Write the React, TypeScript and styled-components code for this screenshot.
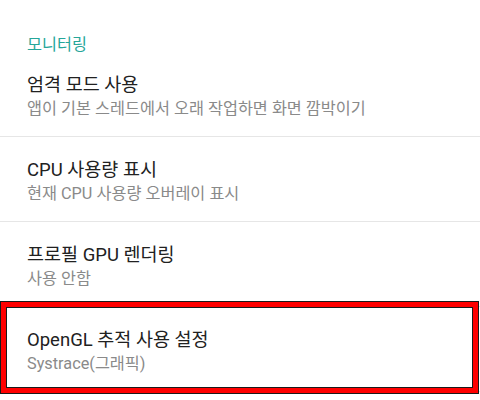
import styled, { createGlobalStyle } from "styled-components"

const GlobalStyle = createGlobalStyle`
  html, body {
    margin: 0;
    padding: 0;
    background: #ffffff;
    overflow: hidden;
  }
  body {
    font-family: Roboto, "Noto Sans CJK KR", "Noto Sans", sans-serif;
  }
`

const Screen = styled.div`
  width: 480px;
  height: 400px;
  background: #ffffff;
  overflow: hidden;
`

const SectionHeader = styled.div`
  padding: 36px 27px 0;
  height: 16px;
  font-size: 16.3px;
  line-height: 18px;
  color: #26a69a;
`

const Row = styled.div`
  position: relative;
  display: flex;
  flex-direction: column;
  height: 85px;
  padding: 21px 27px 0;
  box-sizing: border-box;
  border-bottom: 1px solid #e6e6e6;
`

const Title = styled.div`
  font-size: 18.5px;
  line-height: 24px;
  color: #212121;
`

const Summary = styled.div`
  margin-top: 2px;
  font-size: 16.3px;
  line-height: 20px;
  color: #8a8a8a;
`

const HighlightFrame = styled.div`
  position: absolute;
  left: 1px;
  right: 2px;
  top: -5px;
  bottom: -2px;
  border: 5px solid #ff0000;
  outline: 1px solid #1a1a1a;
  box-shadow: inset 0 0 0 1px #1a1a1a;
  pointer-events: none;
`

type Pref = { title: string; summary: string; highlight?: boolean }

const prefs: Pref[] = [
  { title: "엄격 모드 사용", summary: "앱이 기본 스레드에서 오래 작업하면 화면 깜박이기" },
  { title: "CPU 사용량 표시", summary: "현재 CPU 사용량 오버레이 표시" },
  { title: "프로필 GPU 렌더링", summary: "사용 안함" },
  { title: "OpenGL 추적 사용 설정", summary: "Systrace(그래픽)", highlight: true },
]

export default function App() {
  return (
    <Screen>
      <GlobalStyle />
      <SectionHeader>모니터링</SectionHeader>
      {prefs.map((p) => (
        <Row key={p.title}>
          <Title>{p.title}</Title>
          <Summary>{p.summary}</Summary>
          {p.highlight && <HighlightFrame />}
        </Row>
      ))}
    </Screen>
  )
}
